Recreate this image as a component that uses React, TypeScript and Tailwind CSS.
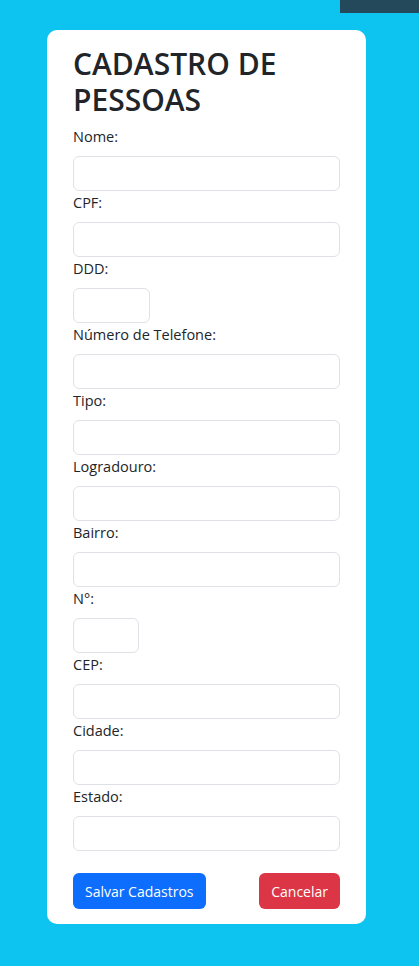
const fields: { label: string; width: string }[] = [
  { label: 'Nome:', width: 'w-full' },
  { label: 'CPF:', width: 'w-full' },
  { label: 'DDD:', width: 'w-[77px]' },
  { label: 'Número de Telefone:', width: 'w-full' },
  { label: 'Tipo:', width: 'w-full' },
  { label: 'Logradouro:', width: 'w-full' },
  { label: 'Bairro:', width: 'w-full' },
  { label: 'N°:', width: 'w-[66px]' },
  { label: 'CEP:', width: 'w-full' },
  { label: 'Cidade:', width: 'w-full' },
  { label: 'Estado:', width: 'w-full' },
];

export default function App() {
  return (
    <div className="min-h-[966px] bg-[#0dc4f0] font-['Open_Sans','Noto_Sans',sans-serif] text-[#212529]">
      {/* top strip */}
      <div className="flex justify-end">
        <div className="h-[13px] w-[79px] bg-[#24495a]" />
      </div>

      <div className="ml-[47px] mt-[17px] w-[319px] rounded-[10px] bg-white px-[26px] pt-[16px] pb-[15px]">
        <h1 className="mb-[8px] text-[30px] font-semibold leading-[36px]">
          CADASTRO DE PESSOAS
        </h1>

        <form>
          {fields.map((f) => (
            <div key={f.label} className="mb-[1px]">
              <label className="mb-[8px] block text-[14.5px] leading-[22px]">{f.label}</label>
              <input
                type="text"
                className={`${f.width} block h-[35px] rounded-[6px] border border-[#dee2e6] bg-white px-3 outline-none`}
              />
            </div>
          ))}

          <div className="mt-[22px] flex items-center justify-between">
            <button
              type="button"
              className="h-[36px] rounded-[6px] bg-[#0d6efd] px-3 text-[14px] text-white"
            >
              Salvar Cadastros
            </button>
            <button
              type="button"
              className="h-[36px] rounded-[6px] bg-[#dc3545] px-3 text-[14px] text-white"
            >
              Cancelar
            </button>
          </div>
        </form>
      </div>
    </div>
  );
}
